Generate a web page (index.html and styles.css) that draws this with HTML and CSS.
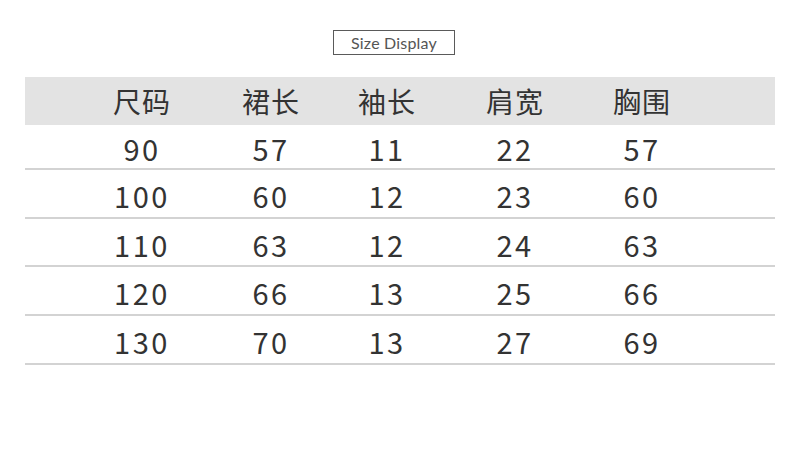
FILE: index.html
```html
<!DOCTYPE html>
<html>
<head>
<meta charset="utf-8">
<link rel="stylesheet" href="styles.css">
</head>
<body>
<div class="page">
  <div class="title-wrap"><div class="title">Size Display</div></div>
  <div class="table">
    <div class="row head">
      <div class="c">尺码</div><div class="c">裙长</div><div class="c">袖长</div><div class="c">肩宽</div><div class="c">胸围</div>
    </div>
    <div class="row first">
      <div class="c">90</div><div class="c">57</div><div class="c">11</div><div class="c">22</div><div class="c">57</div>
    </div>
    <div class="row">
      <div class="c">100</div><div class="c">60</div><div class="c">12</div><div class="c">23</div><div class="c">60</div>
    </div>
    <div class="row short">
      <div class="c">110</div><div class="c">63</div><div class="c">12</div><div class="c">24</div><div class="c">63</div>
    </div>
    <div class="row">
      <div class="c">120</div><div class="c">66</div><div class="c">13</div><div class="c">25</div><div class="c">66</div>
    </div>
    <div class="row">
      <div class="c">130</div><div class="c">70</div><div class="c">13</div><div class="c">27</div><div class="c">69</div>
    </div>
  </div>
</div>
</body>
</html>
```
FILE: styles.css
```css
html, body {
  margin: 0;
  padding: 0;
  background: #ffffff;
}
.page {
  width: 800px;
  height: 450px;
  padding-top: 30px;
  box-sizing: border-box;
}
.title-wrap {
  display: flex;
  justify-content: center;
  padding-right: 12px;
}
.title {
  width: 120px;
  height: 23px;
  border: 1px solid #5a5a5a;
  font-family: "Lato", "Noto Sans", sans-serif;
  font-size: 16px;
  color: #555;
  text-align: center;
  line-height: 23px;
  letter-spacing: 0.2px;
}
.table {
  margin: 22px 25px 0 25px;
  width: 750px;
  font-family: "Noto Sans CJK SC", "Noto Sans", sans-serif;
  color: #333;
}
.row {
  display: grid;
  grid-template-columns: 128px 130px 102px 154px 100px 1fr;
  padding-left: 53px;
  height: 47px;
  border-bottom: 2px solid #d3d3d3;
  align-items: center;
  font-size: 29px;
  letter-spacing: 2.5px;
}
.row.short { height: 46px; }
.row.first { height: 43px; }
.row.head {
  background: #e3e3e3;
  height: 48px;
  border-bottom: none;
  font-size: 28px;
  letter-spacing: 1px;
}
.c {
  text-align: center;
  line-height: 1;
  padding-top: 4px;
}
.row.head .c { padding-top: 0; }
```
